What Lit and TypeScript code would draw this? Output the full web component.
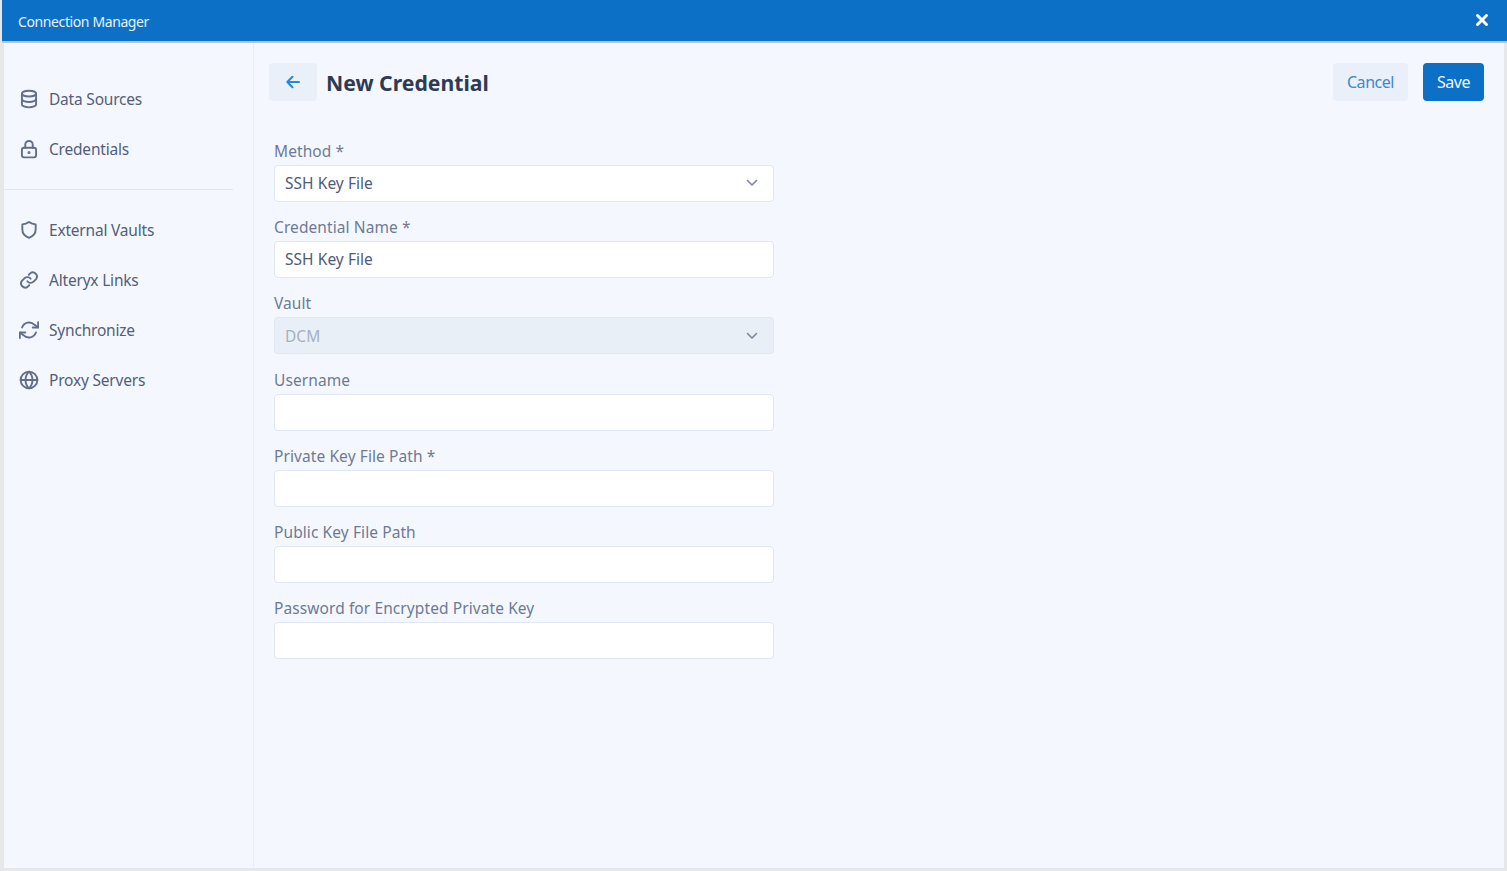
import { LitElement, html, css, svg } from "lit";
import { customElement } from "lit/decorators.js";

const icon = (body: unknown, sw = 2.3) => html`<svg class="ico" viewBox="0 0 24 24" fill="none" stroke="currentColor" stroke-width=${sw} stroke-linecap="round" stroke-linejoin="round">${body}</svg>`;

const icons = {
  db: svg`<ellipse cx="12" cy="5.5" rx="8.5" ry="3.5"/><path d="M3.5 5.5v13c0 1.9 3.8 3.5 8.5 3.5s8.5-1.6 8.5-3.5v-13"/><path d="M3.5 12c0 1.9 3.8 3.5 8.5 3.5s8.5-1.6 8.5-3.5"/>`,
  lock: svg`<rect x="3.5" y="10.5" width="17" height="11.5" rx="2.5"/><path d="M7.5 10.5V6.8a4.5 4.5 0 0 1 9 0v3.7"/><circle cx="12" cy="16.2" r=".7" fill="currentColor"/>`,
  shield: svg`<path d="M12 2.5c2.6 1.8 5 2.6 8 2.8v6.2c0 4.8-3.2 8.2-8 10-4.800-1.800-8-5.200-8-10V5.300c3-.2 5.400-1 8-2.800z"/>`,
  link: svg`<path d="M10 13.500a5 5 0 0 0 7.500.5l3-3a5 5 0 0 0-7-7l-1.700 1.700"/><path d="M14 10.500a5 5 0 0 0-7.500-.5l-3 3a5 5 0 0 0 7 7l1.700-1.700"/>`,
  sync: svg`<path d="M23 2.500v6.500h-6.500"/><path d="M1 21.500V15h6.500"/><path d="M3.700 9a9 9 0 0 1 15-3.200L23 9"/><path d="M1 15l4.300 3.200A9 9 0 0 0 20.300 15"/>`,
  globe: svg`<circle cx="12" cy="12" r="10"/><path d="M2 12h20"/><path d="M12 2c2.800 2.800 4.200 6.100 4.200 10s-1.400 7.200-4.200 10c-2.800-2.800-4.200-6.100-4.200-10S9.200 4.800 12 2z"/>`,
};

const chevron = html`<svg class="chev" viewBox="0 0 12 8" fill="none" stroke="currentColor" stroke-width="1.6" stroke-linecap="round" stroke-linejoin="round"><path d="M1.500 1.500 6 6l4.500-4.500"/></svg>`;

const navTop = [
  ["Data Sources", icons.db],
  ["Credentials", icons.lock],
];
const navBottom = [
  ["External Vaults", icons.shield],
  ["Alteryx Links", icons.link],
  ["Synchronize", icons.sync],
  ["Proxy Servers", icons.globe],
];

type Field = { label: string; value?: string; select?: boolean; disabled?: boolean };
const fields: Field[] = [
  { label: "Method *", value: "SSH Key File", select: true },
  { label: "Credential Name *", value: "SSH Key File" },
  { label: "Vault", value: "DCM", select: true, disabled: true },
  { label: "Username" },
  { label: "Private Key File Path *" },
  { label: "Public Key File Path" },
  { label: "Password for Encrypted Private Key" },
];

@customElement("app-root")
export class AppRoot extends LitElement {
  static styles = css`
    :host {
      display: flex;
      flex-direction: column;
      width: 1507px;
      height: 871px;
      overflow: hidden;
      background: #e6e7e9;
      font-family: "Noto Sans", sans-serif;
      color: #4f5a78;
    }
    .top {
      flex: none;
      box-sizing: border-box;
      height: 43px;
      margin-left: 2px;
      display: flex;
      align-items: center;
      justify-content: space-between;
      padding: 2px 18px 0 16px;
      background: #0b70c6;
      border-bottom: 2px solid #bcc5cf;
      color: #eaf3fb;
      font-size: 14px;
      letter-spacing: -0.39px;
    }
    .close {
      display: flex;
      width: 14px;
      height: 14px;
      margin-top: -4px;
      color: #fff;
    }
    .close svg { width: 100%; height: 100%; }
    .body {
      flex: 1;
      min-height: 0;
      display: flex;
      margin: 0 3px 3px 4px;
      background: #f4f8fe;
    }
    .side {
      flex: none;
      width: 250px;
      box-sizing: border-box;
      border-right: 1px solid #e9eef6;
      padding-top: 31px;
    }
    .nav-item {
      display: flex;
      align-items: center;
      gap: 10px;
      height: 50px;
      padding-left: 15px;
      font-size: 15.500px;
      letter-spacing: -0.2px;
      color: #535e7b;
    }
    .ico { width: 20px; height: 20px; flex: none; color: #636e8c; }
    .rule {
      width: 229px;
      height: 1px;
      margin: 15px 0;
      background: #e0e6f0;
    }
    .main {
      flex: 1;
      min-width: 0;
      padding: 20px 20px 0 15px;
    }
    .head {
      display: flex;
      align-items: center;
      gap: 10px;
      height: 38px;
    }
    .back {
      width: 48px;
      height: 38px;
      margin-right: -1px;
      display: flex;
      align-items: center;
      justify-content: center;
      border-radius: 4px;
      background: #e9f0f9;
      color: #2a86d6;
    }
    .back svg { width: 16px; height: 16px; }
    h1 {
      margin: 0;
      flex: 1;
      font-size: 21.200px;
      font-weight: 700;
      color: #2f3a55;
    }
    .btn {
      height: 38px;
      box-sizing: border-box;
      display: flex;
      align-items: center;
      justify-content: center;
      border-radius: 4px;
      font-size: 16px;
      letter-spacing: -0.45px;
    }
    .cancel {
      width: 75px;
      margin-right: 5px;
      background: #e9f0f9;
      color: #3f88c9;
    }
    .save {
      width: 61px;
      background: #0b70c6;
      color: #f1f7fd;
    }
    form {
      display: flex;
      flex-direction: column;
      gap: 11.300px;
      width: 500px;
      margin: 35.700px 0 0 5px;
    }
    label {
      display: block;
      height: 28px;
      line-height: 28px;
      font-size: 15.500px;
      letter-spacing: 0.09px;
      color: #6f7a94;
    }
    .input {
      box-sizing: border-box;
      height: 37px;
      display: flex;
      align-items: center;
      justify-content: space-between;
      padding: 0 15px 0 10px;
      background: #fff;
      border: 1px solid #e0e6f2;
      border-radius: 4px;
      font-size: 15.500px;
      letter-spacing: 0.05px;
      color: #4f5a78;
    }
    .input.disabled {
      background: #e9eff7;
      color: #a6b0c3;
    }
    .chev { width: 12px; height: 8px; color: #7c869e; }
  `;

  render() {
    const item = ([t, i]: any[]) => html`<div class="nav-item">${icon(i)}<span>${t}</span></div>`;
    return html`
      <div class="top">
        <span>Connection Manager</span>
        <span class="close"><svg viewBox="0 0 14 14" fill="none" stroke="currentColor" stroke-width="3" stroke-linecap="round"><path d="M2.500 2.500l9 9M11.500 2.500l-9 9"/></svg></span>
      </div>
      <div class="body">
        <nav class="side">
          ${navTop.map(item)}
          <div class="rule"></div>
          ${navBottom.map(item)}
        </nav>
        <main class="main">
          <div class="head">
            <span class="back"><svg viewBox="0 0 16 16" fill="none" stroke="currentColor" stroke-width="2" stroke-linecap="round" stroke-linejoin="round"><path d="M14 8H2.500M7.500 2.800 2.300 8l5.200 5.200"/></svg></span>
            <h1>New Credential</h1>
            <span class="btn cancel">Cancel</span>
            <span class="btn save">Save</span>
          </div>
          <form>
            ${fields.map(
              (f) => html`<div>
                <label>${f.label}</label>
                <div class="input ${f.disabled ? "disabled" : ""}">
                  <span>${f.value ?? ""}</span>${f.select ? chevron : ""}
                </div>
              </div>`
            )}
          </form>
        </main>
      </div>
    `;
  }
}
